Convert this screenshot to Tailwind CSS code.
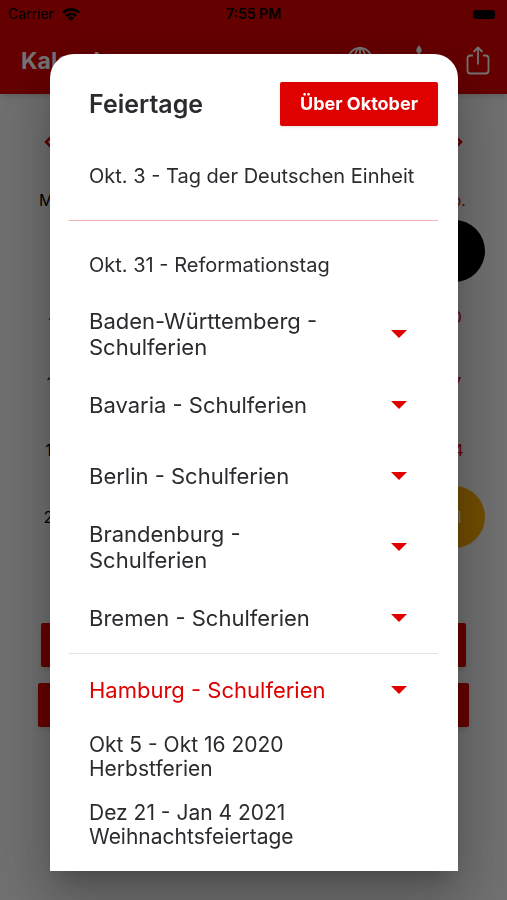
<!DOCTYPE html>
<html lang="de">
<head>
    <meta charset="UTF-8">
    <meta name="viewport" content="width=device-width, initial-scale=1.0">
    <title>Kalender</title>
    <script src="https://cdn.jsdelivr.net/npm/@tailwindcss/browser@4"></script>
</head>
<body class="bg-[#f5f5f5] font-['Inter','Liberation_Sans',sans-serif] text-[#2a2b2e]">
    <div class="h-screen overflow-hidden">
        <!-- App bar -->
        <header class="bg-[#df0000] h-[94px] shadow-md">
            <div class="grid grid-cols-3 items-center h-7 px-2 text-sm text-black">
                <div class="flex items-center gap-2">
                    <span>Carrier</span>
                    <svg class="w-[18px] h-[13px]" viewBox="0 0 18 13" fill="none" stroke="currentColor" stroke-width="2.6">
                        <path d="M1 4.6a11.6 11.6 0 0 1 16 0"/>
                        <path d="M4 8a7.4 7.4 0 0 1 10 0"/>
                        <path d="M9 13 6 10a4.3 4.3 0 0 1 6 0z" fill="currentColor" stroke="none"/>
                    </svg>
                </div>
                <span class="text-center font-semibold">7:55 PM</span>
                <span class="justify-self-end w-[22px] h-[9px] mr-1 rounded-[3px] bg-black"></span>
            </div>
            <div class="flex items-center justify-between pt-0.5 pl-[21px] pr-[15px]">
                <h1 class="text-[23px] leading-[62px] font-bold text-white">Kalender</h1>
                <div class="flex items-center gap-[31px] text-white">
                    <button type="button" aria-label="Sprache">
                        <svg class="w-7 h-8" viewBox="0 0 28 32" fill="none" stroke="currentColor" stroke-width="1.8">
                            <circle cx="14" cy="15" r="12"/>
                            <ellipse cx="14" cy="15" rx="5.5" ry="12"/>
                            <path d="M14 3v24M2 15h24M4 9.500c5 3 15 3 20 0M4 20.500c5-3 15-3 20 0"/>
                        </svg>
                    </button>
                    <button type="button" aria-label="Geburtstage">
                        <svg class="w-7 h-8" viewBox="0 0 28 32" fill="none" stroke="currentColor" stroke-width="1.8">
                            <path d="M14 0c-2 3-2.700 4-2.700 5.200a2.700 2.700 0 0 0 5.400 0C16.700 4 16 3 14 0z" fill="currentColor" stroke="none"/>
                            <path d="M14 8v8M4 30V18h20v12zM4 23c3 3 5 3 7 0 2 3 5 3 7 0 2 3 4 3 6 0"/>
                        </svg>
                    </button>
                    <button type="button" aria-label="Teilen">
                        <svg class="w-7 h-8" viewBox="0 0 28 32" fill="none" stroke="currentColor" stroke-width="1.8" stroke-linejoin="round">
                            <path d="M9 10.500H6.500a3 3 0 0 0-3 3V25.500a3 3 0 0 0 3 3h15a3 3 0 0 0 3-3V13.500a3 3 0 0 0-3-3H19"/>
                            <path d="M14 19.500V2.500M9.500 7 14 2.500 18.500 7"/>
                        </svg>
                    </button>
                </div>
            </div>
        </header>

        <!-- Month -->
        <main>
            <div class="flex items-center justify-between px-11 pt-9 h-[60px] text-[#df0000]">
                <button type="button" aria-label="Vorheriger Monat">
                    <svg class="w-2 h-3" viewBox="0 0 8 12" fill="none" stroke="currentColor" stroke-width="2.500"><path d="M7 1 2 6l5 5"/></svg>
                </button>
                <button type="button" aria-label="Nächster Monat">
                    <svg class="w-2 h-3" viewBox="0 0 8 12" fill="none" stroke="currentColor" stroke-width="2.500"><path d="m1 1 5 5-5 5"/></svg>
                </button>
            </div>
            <table class="w-full table-fixed border-separate border-spacing-0 px-5 pt-7 text-center text-base text-black">
                <thead>
                    <tr class="h-9">
                        <th class="font-normal">Mo.</th><th></th><th></th><th></th><th></th><th></th>
                        <th class="font-normal text-[#df0000]">So.</th>
                    </tr>
                </thead>
                <tbody>
                    <tr class="h-[66px]">
                        <td></td><td></td><td></td><td></td><td></td><td></td>
                        <td><span class="block size-[62px] leading-[62px] mx-auto rounded-full bg-black">3</span></td>
                    </tr>
                    <tr class="h-[66px]"><td>4</td><td></td><td></td><td></td><td></td><td></td><td class="text-[#df0000]">10</td></tr>
                    <tr class="h-[66px]"><td>11</td><td></td><td></td><td></td><td></td><td></td><td class="text-[#df0000]">17</td></tr>
                    <tr class="h-[68px]"><td>18</td><td></td><td></td><td></td><td></td><td></td><td class="text-[#df0000]">24</td></tr>
                    <tr class="h-[66px]">
                        <td>25</td><td></td><td></td><td></td><td></td><td></td>
                        <td><span class="block size-[62px] leading-[62px] mx-auto rounded-full bg-[#f5a800] text-white">31</span></td>
                    </tr>
                </tbody>
            </table>
            <div class="flex flex-col gap-4 px-[38px] pt-[73px]">
                <button type="button" aria-label="Feiertage anzeigen" class="h-11 mx-[3px] rounded-xs bg-[#df0000] shadow-md"></button>
                <button type="button" aria-label="Über den Monat" class="h-11 rounded-xs bg-[#df0000] shadow-md"></button>
            </div>
        </main>
    </div>

    <!-- Dialog -->
    <div class="fixed inset-0 flex flex-col pl-[50px] pr-[49px] pt-[54px] pb-[29px] bg-black/55">
        <div role="dialog" aria-labelledby="dialogTitle" class="flex-1 min-h-0 overflow-hidden pl-[19px] pr-5 pt-7 rounded-t-3xl bg-white shadow-[0_14px_20px_-9px_rgba(0,0,0,0.2),0_30px_48px_4px_rgba(0,0,0,0.14),0_12px_58px_10px_rgba(0,0,0,0.12)]">
            <div class="flex items-center justify-between pl-5">
                <h2 id="dialogTitle" class="text-[25px] leading-8 font-semibold">Feiertage</h2>
                <button type="button" class="h-11 px-5 rounded-xs bg-[#df0000] text-lg font-bold text-white shadow-sm">Über Oktober</button>
            </div>

            <p class="mt-1.5 px-5 py-8 text-xl leading-6 border-b border-[#f3b5b5]">Okt. 3 - Tag der Deutschen Einheit</p>
            <p class="px-5 pt-8 pb-[21px] text-xl leading-6">Okt. 31 - Reformationstag</p>

            <details>
                <summary class="flex items-center gap-9 h-[71px] px-5 text-[22px] leading-[26px]">
                    <span class="flex-1">Baden-Württemberg - Schulferien</span>
                    <svg class="w-[38px] h-2 text-[#df0000]" viewBox="0 0 38 8" fill="currentColor"><path d="M11 0h16l-8 8z"/></svg>
                </summary>
            </details>
            <details>
                <summary class="flex items-center gap-9 h-[71px] px-5 text-[22px] leading-[26px]">
                    <span class="flex-1">Bavaria - Schulferien</span>
                    <svg class="w-[38px] h-2 text-[#df0000]" viewBox="0 0 38 8" fill="currentColor"><path d="M11 0h16l-8 8z"/></svg>
                </summary>
            </details>
            <details>
                <summary class="flex items-center gap-9 h-[71px] px-5 text-[22px] leading-[26px]">
                    <span class="flex-1">Berlin - Schulferien</span>
                    <svg class="w-[38px] h-2 text-[#df0000]" viewBox="0 0 38 8" fill="currentColor"><path d="M11 0h16l-8 8z"/></svg>
                </summary>
            </details>
            <details>
                <summary class="flex items-center gap-9 h-[71px] px-5 text-[22px] leading-[26px]">
                    <span class="flex-1">Brandenburg - Schulferien</span>
                    <svg class="w-[38px] h-2 text-[#df0000]" viewBox="0 0 38 8" fill="currentColor"><path d="M11 0h16l-8 8z"/></svg>
                </summary>
            </details>
            <details>
                <summary class="flex items-center gap-9 h-[71px] px-5 text-[22px] leading-[26px]">
                    <span class="flex-1">Bremen - Schulferien</span>
                    <svg class="w-[38px] h-2 text-[#df0000]" viewBox="0 0 38 8" fill="currentColor"><path d="M11 0h16l-8 8z"/></svg>
                </summary>
            </details>
            <details open class="border-t border-[#e2e2e2]">
                <summary class="flex items-center gap-9 h-[71px] px-5 text-[22px] leading-[26px] text-[#df0000]">
                    <span class="flex-1">Hamburg - Schulferien</span>
                    <svg class="w-[38px] h-2 text-[#df0000]" viewBox="0 0 38 8" fill="currentColor"><path d="M11 0h16l-8 8z"/></svg>
                </summary>
                <div class="flex flex-col gap-5 px-5 pt-2 text-[21px] leading-6">
                    <p>Okt 5 - Okt 16 2020<br>Herbstferien</p>
                    <p>Dez 21 - Jan 4 2021<br>Weihnachtsfeiertage</p>
                </div>
            </details>
        </div>
    </div>
</body>
</html>
